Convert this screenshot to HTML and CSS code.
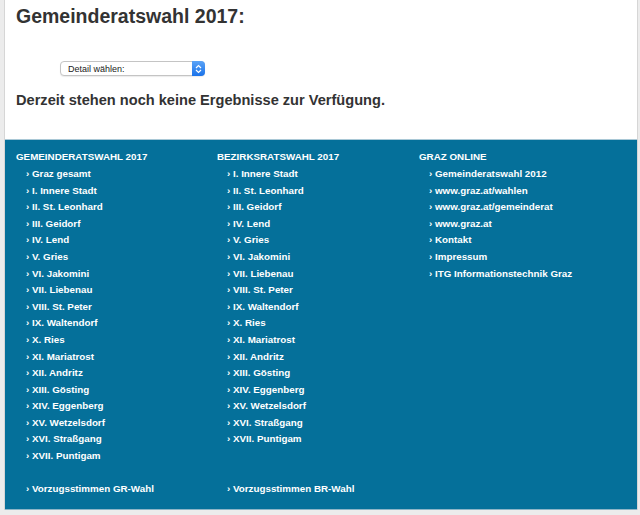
FILE: index.html
```html
<!DOCTYPE html>
<html lang="de">
<head>
<meta charset="utf-8">
<title>Gemeinderatswahl 2017</title>
<link rel="stylesheet" href="styles.css">
</head>
<body>
<div class="wrap">
  <header class="top">
    <h1 class="title">Gemeinderatswahl 2017:</h1>
    <div class="select">
      <span class="select-text">Detail wählen:</span>
      <span class="select-btn">
        <svg width="7" height="10" viewBox="0 0 7 10"><path d="M1 4 L3.5 1.5 L6 4 M1 6 L3.5 8.5 L6 6" fill="none" stroke="#fff" stroke-width="1.2"/></svg>
      </span>
    </div>
    <h2 class="notice">Derzeit stehen noch keine Ergebnisse zur Verfügung.</h2>
  </header>
  <footer class="foot">
    <div class="cols">
      <div class="col">
        <div class="col-head">GEMEINDERATSWAHL 2017</div>
        <ul class="links">
          <li>› Graz gesamt</li>
          <li>› I. Innere Stadt</li>
          <li>› II. St. Leonhard</li>
          <li>› III. Geidorf</li>
          <li>› IV. Lend</li>
          <li>› V. Gries</li>
          <li>› VI. Jakomini</li>
          <li>› VII. Liebenau</li>
          <li>› VIII. St. Peter</li>
          <li>› IX. Waltendorf</li>
          <li>› X. Ries</li>
          <li>› XI. Mariatrost</li>
          <li>› XII. Andritz</li>
          <li>› XIII. Gösting</li>
          <li>› XIV. Eggenberg</li>
          <li>› XV. Wetzelsdorf</li>
          <li>› XVI. Straßgang</li>
          <li>› XVII. Puntigam</li>
        </ul>
      </div>
      <div class="col">
        <div class="col-head">BEZIRKSRATSWAHL 2017</div>
        <ul class="links">
          <li>› I. Innere Stadt</li>
          <li>› II. St. Leonhard</li>
          <li>› III. Geidorf</li>
          <li>› IV. Lend</li>
          <li>› V. Gries</li>
          <li>› VI. Jakomini</li>
          <li>› VII. Liebenau</li>
          <li>› VIII. St. Peter</li>
          <li>› IX. Waltendorf</li>
          <li>› X. Ries</li>
          <li>› XI. Mariatrost</li>
          <li>› XII. Andritz</li>
          <li>› XIII. Gösting</li>
          <li>› XIV. Eggenberg</li>
          <li>› XV. Wetzelsdorf</li>
          <li>› XVI. Straßgang</li>
          <li>› XVII. Puntigam</li>
        </ul>
      </div>
      <div class="col">
        <div class="col-head">GRAZ ONLINE</div>
        <ul class="links">
          <li>› Gemeinderatswahl 2012</li>
          <li>› www.graz.at/wahlen</li>
          <li>› www.graz.at/gemeinderat</li>
          <li>› www.graz.at</li>
          <li>› Kontakt</li>
          <li>› Impressum</li>
          <li>› ITG Informationstechnik Graz</li>
        </ul>
      </div>
      <ul class="links extra"><li>› Vorzugsstimmen GR-Wahl</li></ul>
      <ul class="links extra"><li>› Vorzugsstimmen BR-Wahl</li></ul>
      <div></div>
    </div>
  </footer>
</div>
</body>
</html>
```
FILE: styles.css
```css
html, body {
  margin: 0;
  padding: 0;
}
body {
  background: #ececec;
  font-family: "Liberation Sans", Arial, Helvetica, sans-serif;
  width: 640px;
  height: 515px;
  overflow: hidden;
}
.wrap {
  margin: 0 2px 0 4px;
  border-left: 1px solid #d6d6d6;
  border-right: 1px solid #d6d6d6;
  background: #fff;
}
.top {
  height: 139px;
  padding: 0 0 0 11px;
  box-sizing: border-box;
  overflow: hidden;
}
.title {
  margin: 4px 0 0 0;
  font-size: 19.5px;
  line-height: 24px;
  font-weight: bold;
  color: #333;
}
.select {
  margin: 33px 0 0 44px;
  width: 145px;
  height: 15px;
  border: 1px solid #c4c4c4;
  border-radius: 4px;
  box-sizing: border-box;
  display: flex;
  align-items: center;
  justify-content: space-between;
  background: #fff;
  box-shadow: 0 1px 1px rgba(0,0,0,0.08);
}
.select-text {
  font-size: 9px;
  color: #222;
  padding-left: 7px;
}
.select-btn {
  width: 13px;
  height: 15px;
  margin: -1px -1px -1px 0;
  background: linear-gradient(#5aa3f7, #1a73ea);
  border-radius: 0 4px 4px 0;
  display: flex;
  align-items: center;
  justify-content: center;
}
.notice {
  margin: 15px 0 0 0;
  font-size: 14.6px;
  line-height: 18px;
  font-weight: bold;
  color: #333;
}
.foot {
  background: #05709a;
  border-top: 1px solid #a9c8d6;
  border-bottom: 1px solid #8db5c7;
  padding: 9px 0 11px 11px;
  color: #fff;
  font-size: 9.8px;
  line-height: 16.6px;
  font-weight: bold;
}
.cols {
  display: grid;
  grid-template-columns: 201px 202px 1fr;
}
.col-head {
  margin-bottom: 0.4px;
}
.links {
  list-style: none;
  margin: 0;
  padding: 0 0 0 10px;
}
.extra {
  margin-top: 16.6px;
}
```
